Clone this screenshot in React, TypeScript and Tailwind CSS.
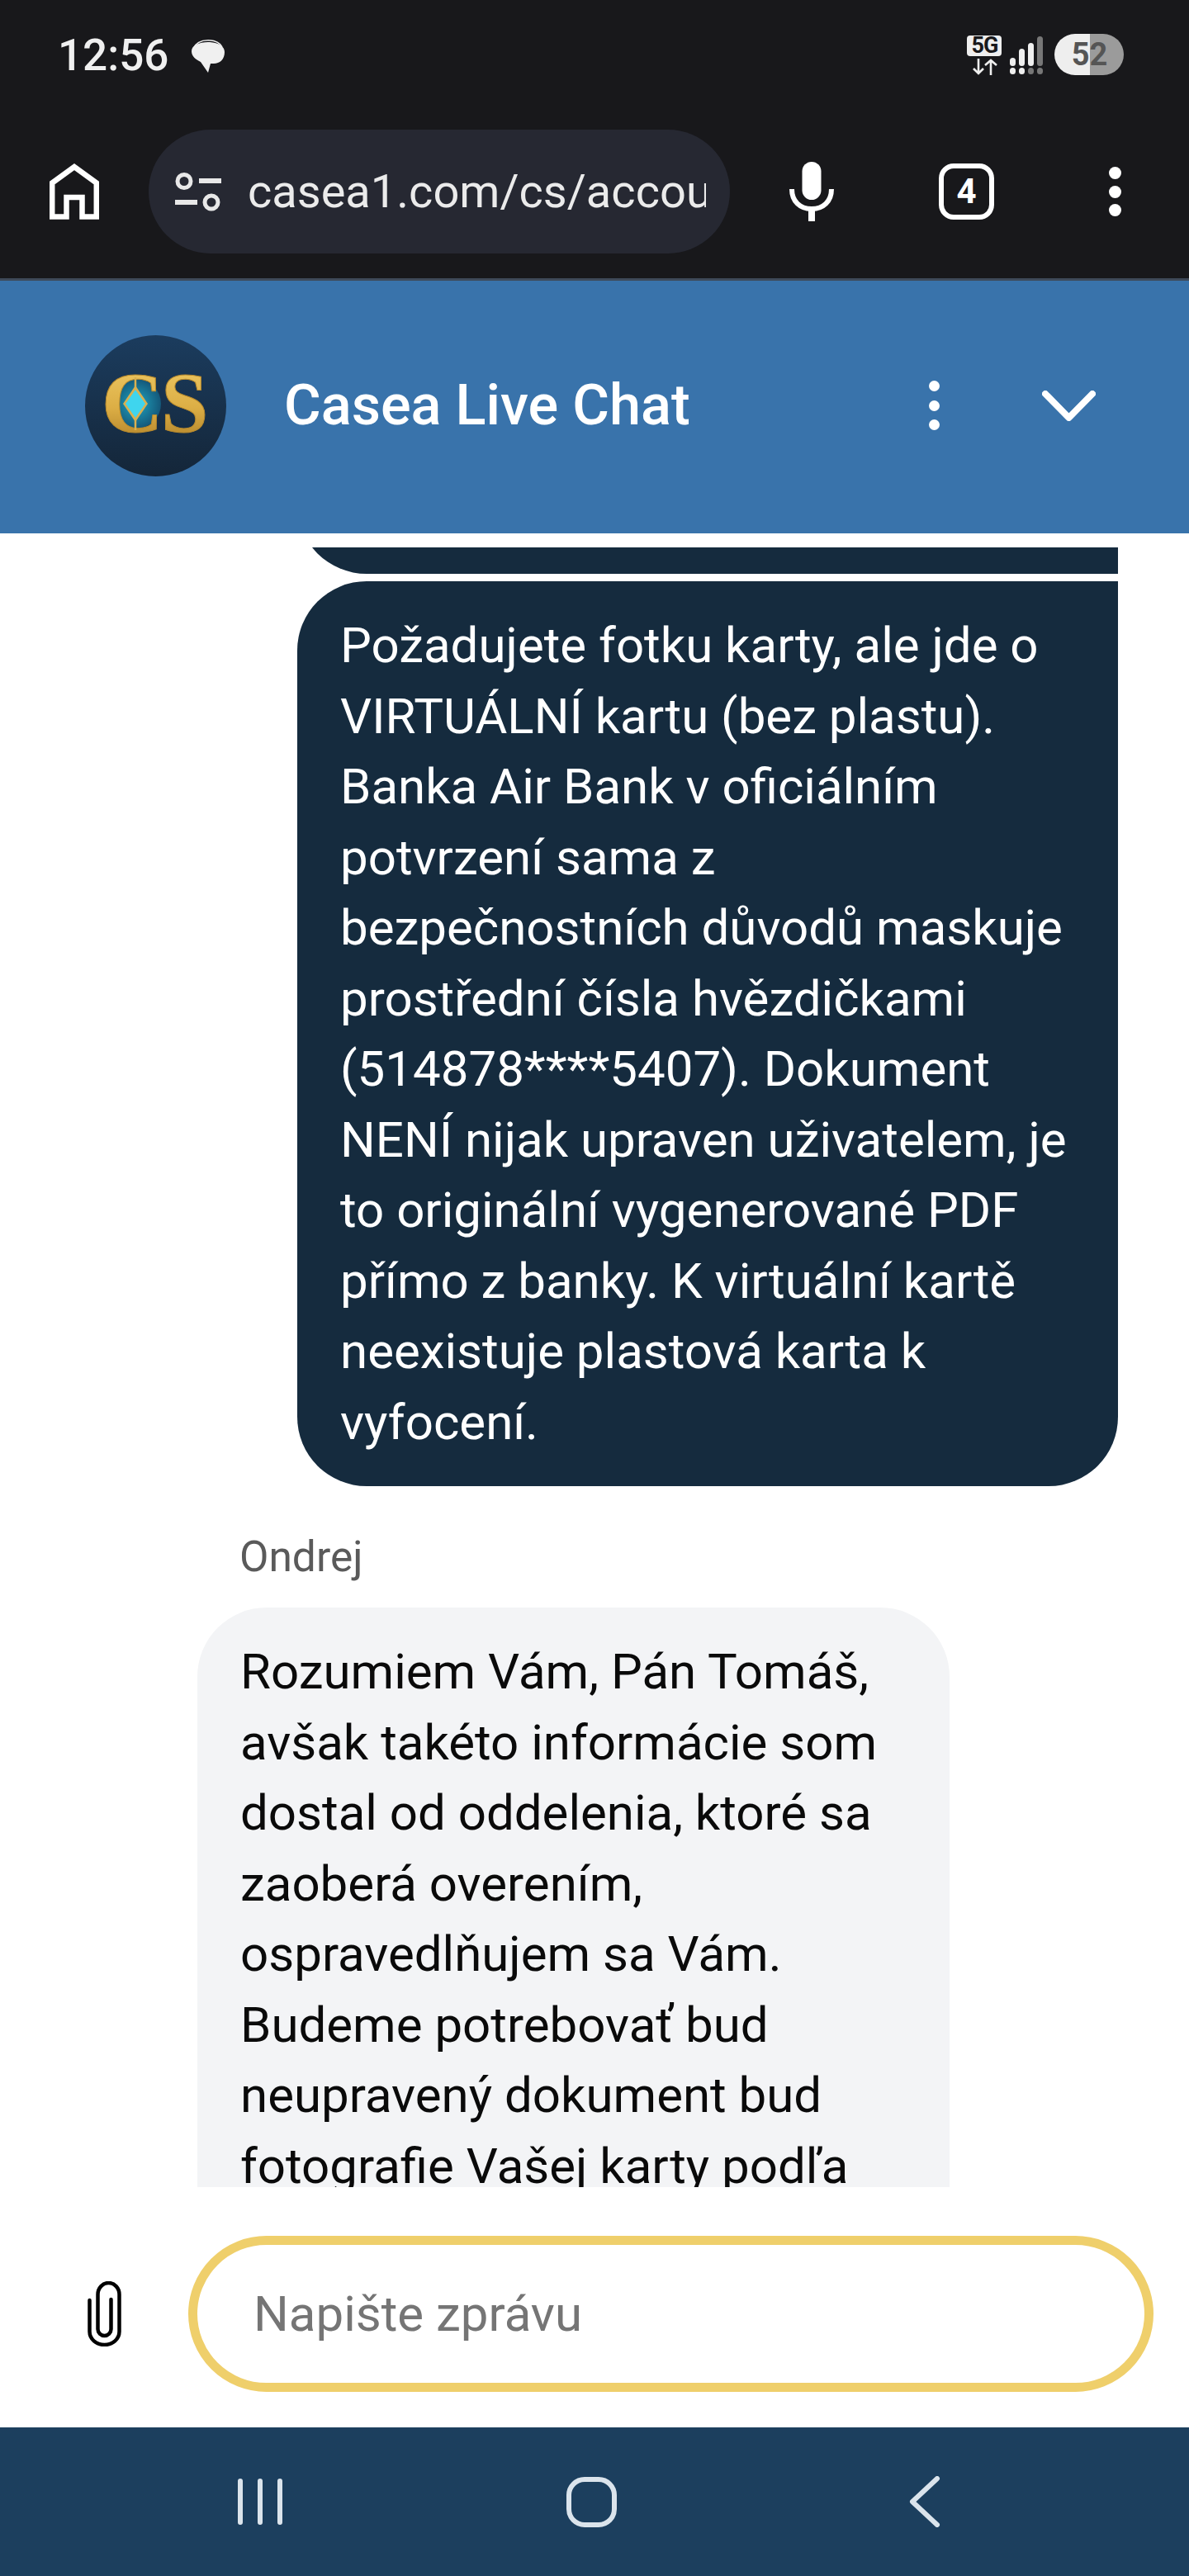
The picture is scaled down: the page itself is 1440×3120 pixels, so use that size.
import React from "react";

const outgoing = [
  "Požadujete fotku karty, ale jde o",
  "VIRTUÁLNÍ kartu (bez plastu).",
  "Banka Air Bank v oficiálním",
  "potvrzení sama z",
  "bezpečnostních důvodů maskuje",
  "prostřední čísla hvězdičkami",
  "(514878****5407). Dokument",
  "NENÍ nijak upraven uživatelem, je",
  "to originální vygenerované PDF",
  "přímo z banky. K virtuální kartě",
  "neexistuje plastová karta k",
  "vyfocení.",
];

const incoming = [
  "Rozumiem Vám, Pán Tomáš,",
  "avšak takéto informácie som",
  "dostal od oddelenia, ktoré sa",
  "zaoberá overením,",
  "ospravedlňujem sa Vám.",
  "Budeme potrebovať bud",
  "neupravený dokument bud",
  "fotografie Vašej karty podľa",
];

function StatusBar() {
  return (
    <div className="flex h-[157px] items-start">
      <span className="ml-[70px] mt-[38px] text-[53px] leading-[58px] font-medium text-[#f0f0f0]">12:56</span>
      <svg className="ml-[28px] mt-[48px] h-[40px] w-[40px]" viewBox="0 0 40 40">
        <path d="M2 11C5 4 11 .8 20 .8s14 3 17 8" fill="none" stroke="#f0f0f0" strokeWidth="1.500" />
        <path d="M20 3C32 3 40 8 40 15 40 24 34 29 27 29H23L20 40 11 27C5 24 0 20 0 14 0 7 9 3 20 3z" fill="#f0f0f0" />
      </svg>
      <div className="ml-[899px] mt-[43px] flex w-[42px] flex-col items-center">
        <span className="h-[25px] w-[42px] rounded-[4px] bg-[#efefef] text-center text-[27px] leading-[25px] font-bold tracking-[-1px] text-[#18181b]">5G</span>
        <svg className="mt-[3px] h-[20px] w-[32px]" viewBox="0 0 32 20" fill="none" stroke="#efefef" strokeWidth="2.600">
          <path d="M9 0v18M3 12l6 6 6-6" />
          <path d="M24 20V2M17 8l7-6 7 6" />
        </svg>
      </div>
      <svg className="ml-[9px] mt-[44px] h-[46px] w-[42px]" viewBox="0 0 42 46">
        <rect x="1" y="26" width="7" height="10" rx="3.500" fill="#efefef" />
        <rect x="1" y="38" width="7" height="8" rx="3.500" fill="#efefef" />
        <rect x="12" y="15" width="7" height="21" rx="3.500" fill="#efefef" />
        <rect x="12" y="38" width="7" height="8" rx="3.500" fill="#efefef" />
        <rect x="23" y="8" width="7" height="28" rx="3.500" fill="#efefef" />
        <rect x="23" y="38" width="7" height="8" rx="3.500" fill="#777" />
        <rect x="34" y="0" width="7" height="36" rx="3.500" fill="#777" />
        <rect x="34" y="38" width="7" height="8" rx="3.500" fill="#777" />
      </svg>
      <div className="ml-[13px] mt-[41px] flex h-[50px] w-[84px] items-center justify-center rounded-full bg-[linear-gradient(90deg,#eeeeee_0,#eeeeee_51%,#9b9b9b_51%,#9b9b9b_100%)] text-[38px] font-bold text-[#555]">
        52
      </div>
    </div>
  );
}

function Toolbar() {
  return (
    <div className="flex h-[150px] items-center">
      <svg className="ml-[60px] h-[68px] w-[60px]" viewBox="0 0 60 68" fill="none" stroke="#fff" strokeWidth="6.500">
        <path d="M3.200 64.500V23.500L30 4l26.800 19.500v41H39.500V41H20.500v23.500z" />
      </svg>
      <div className="ml-[60px] flex h-[150px] w-[704px] items-center rounded-full bg-[#262832]">
        <svg className="ml-[32px] h-[47px] w-[56px] shrink-0" viewBox="0 0 56 47" fill="none" stroke="#e8e8e8">
          <circle cx="11" cy="10.500" r="8" strokeWidth="5" />
          <path d="M29 10h27" strokeWidth="6" />
          <path d="M0 36h27" strokeWidth="6" />
          <circle cx="44" cy="36" r="8" strokeWidth="5" />
        </svg>
        <div className="ml-[32px] w-[555px] overflow-hidden whitespace-nowrap text-[56px] leading-[70px] text-[#ebebeb]">casea1.com/cs/account</div>
      </div>
      <svg className="ml-[72px] h-[72px] w-[54px]" viewBox="0 0 54 72" fill="none">
        <rect x="15.500" y="0" width="23" height="46" rx="11.500" fill="#fff" />
        <path d="M3 33c0 15 10 24 24 24s24-9 24-24" stroke="#fff" strokeWidth="6" />
        <path d="M27 56v16" stroke="#fff" strokeWidth="8" />
      </svg>
      <div className="ml-[127px] flex h-[68px] w-[67px] items-center justify-center rounded-[18px] border-[6px] border-white text-[42px] leading-none font-bold text-white">4</div>
      <div className="ml-[139px] flex h-[60px] flex-col justify-between">
        <span className="h-[15px] w-[15px] rounded-full bg-white" />
        <span className="h-[15px] w-[15px] rounded-full bg-white" />
        <span className="h-[15px] w-[15px] rounded-full bg-white" />
      </div>
    </div>
  );
}

function Logo() {
  return (
    <svg className="mb-[3px] ml-[103px] h-[171px] w-[171px] shrink-0" viewBox="0 0 171 171">
      <defs>
        <linearGradient id="bg" x1="0" y1="0" x2="0" y2="1">
          <stop offset="0" stopColor="#1b3c5e" />
          <stop offset="1" stopColor="#142639" />
        </linearGradient>
        <linearGradient id="gold" x1="0" y1="0" x2="0" y2="1">
          <stop offset="0" stopColor="#f0cc68" />
          <stop offset="0.55" stopColor="#dcae45" />
          <stop offset="1" stopColor="#a87a24" />
        </linearGradient>
        <radialGradient id="glow">
          <stop offset="0" stopColor="#1fa6c2" />
          <stop offset="1" stopColor="#14587a" />
        </radialGradient>
      </defs>
      <circle cx="85.500" cy="85.500" r="85.500" fill="url(#bg)" />
      <circle cx="62" cy="83" r="30" fill="url(#glow)" />
      <text x="20" y="117" fontFamily="Liberation Serif, serif" fontSize="103" fontWeight="700" fill="url(#gold)" stroke="#b98a2c" strokeWidth="1">C</text>
      <text x="92" y="117" fontFamily="Liberation Serif, serif" fontSize="103" fontWeight="700" fill="url(#gold)" stroke="#b98a2c" strokeWidth="1">S</text>
      <path d="M61 51v64" stroke="#d9b050" strokeWidth="2.500" />
      <path d="M61 61l15 22-15 22-15-22z" fill="#d9b050" />
      <path d="M61 66l12 17-12 17-12-17z" fill="#3fd5ee" />
    </svg>
  );
}

function Header() {
  return (
    <div className="flex h-[306px] items-center bg-[#3973ab]">
      <Logo />
      <span className="mb-[3px] ml-[70px] text-[68.500px] leading-none font-medium text-white">Casea Live Chat</span>
      <div className="mb-[4px] ml-[289px] flex h-[60px] flex-col justify-between">
        <span className="h-[13px] w-[13px] rounded-full bg-white" />
        <span className="h-[13px] w-[13px] rounded-full bg-white" />
        <span className="h-[13px] w-[13px] rounded-full bg-white" />
      </div>
      <svg className="mb-[4px] ml-[124px] h-[37px] w-[65px]" viewBox="0 0 65 37" fill="none" stroke="#fff" strokeWidth="8" strokeLinecap="round" strokeLinejoin="round">
        <path d="M4 4l28.500 29L61 4" />
      </svg>
    </div>
  );
}

function Messages() {
  return (
    <div className="flex h-[2003px] flex-col overflow-hidden bg-white pt-[17px]">
      <div className="ml-[360px] h-[32px] w-[994px] shrink-0 overflow-hidden">
        <div className="-mt-[168px] h-[200px] rounded-bl-[84px] bg-[#152b3e]" />
      </div>
      <div className="ml-[360px] mt-[9px] w-[994px] shrink-0 rounded-[84px] rounded-tr-none bg-[#152b3e] px-[52px] py-[35px] text-[60px] leading-[85.500px] whitespace-nowrap text-white">
        {outgoing.map((l) => (
          <div key={l}>{l}</div>
        ))}
      </div>
      <div className="ml-[290px] mt-[50px] text-[51.500px] leading-[72px] text-[#5a5a5a]">Ondrej</div>
      <div className="ml-[239px] mt-[25px] h-[900px] w-[911px] shrink-0 rounded-[84px] bg-[#f3f4f6] px-[52px] py-[35px] text-[60px] leading-[85.500px] whitespace-nowrap text-[#0a0a0a]">
        {incoming.map((l) => (
          <div key={l}>{l}</div>
        ))}
      </div>
    </div>
  );
}

function Composer() {
  return (
    <div className="flex h-[291px] items-start bg-white pt-[59px]">
      <svg className="ml-[106px] mt-[55px] h-[79px] w-[41px] shrink-0" viewBox="0 0 41 79" fill="none" stroke="#000" strokeWidth="4.500" strokeLinecap="round">
        <path d="M2.500 23v38a18 16 0 0 0 36 0V16A13 14 0 0 0 12.500 16v42a8 8 0 0 0 16 0V22" />
      </svg>
      <div className="ml-[81px] flex h-[189px] w-[1169px] items-center rounded-full border-[11.500px] border-[#efcf6b] bg-white pl-[68px] text-[60px] text-[#757575]">
        Napište zprávu
      </div>
    </div>
  );
}

function NavBar() {
  return (
    <div className="flex h-[180px] items-center bg-[#1c3f5e]">
      <div className="ml-[288px] flex h-[56px] w-[54px] justify-between">
        <span className="h-[56px] w-[6px] rounded-full bg-[#dbe4ec]" />
        <span className="h-[56px] w-[6px] rounded-full bg-[#dbe4ec]" />
        <span className="h-[56px] w-[6px] rounded-full bg-[#dbe4ec]" />
      </div>
      <div className="ml-[344px] h-[61px] w-[61px] rounded-[22px] border-[6px] border-[#dbe4ec]" />
      <svg className="ml-[354px] h-[62px] w-[38px]" viewBox="0 0 38 62" fill="none" stroke="#dbe4ec" strokeWidth="6" strokeLinecap="round" strokeLinejoin="round">
        <path d="M34 3L4 31l30 28" />
      </svg>
    </div>
  );
}

export default function App() {
  return (
    <div className="flex h-[3120px] w-[1440px] flex-col overflow-hidden bg-white [font-family:Roboto,sans-serif]">
      <div className="h-[340px] shrink-0 border-b-[3px] border-[#3f4a5a] bg-[#18181b]">
        <StatusBar />
        <Toolbar />
      </div>
      <Header />
      <Messages />
      <Composer />
      <NavBar />
    </div>
  );
}
